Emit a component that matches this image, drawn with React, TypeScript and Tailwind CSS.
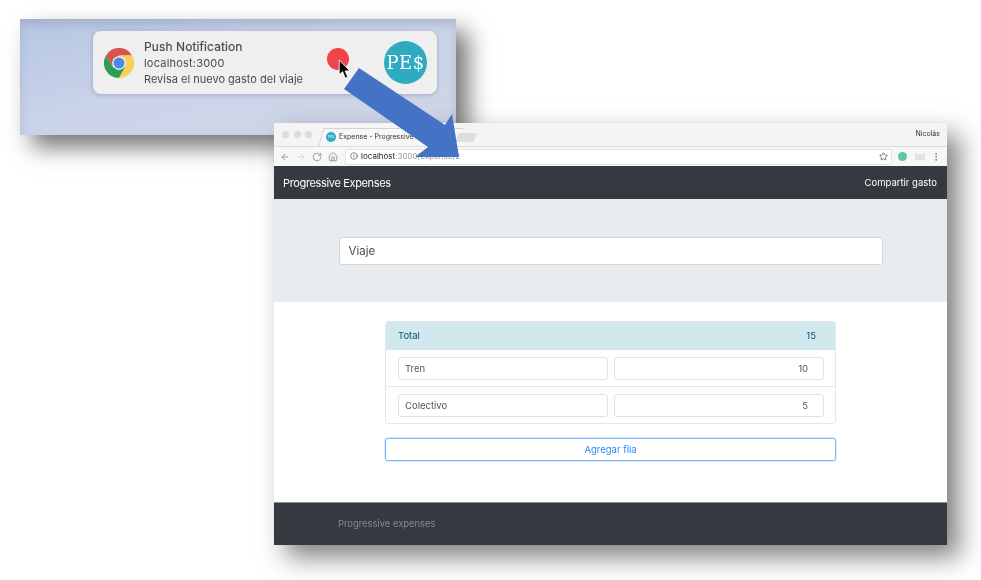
import { ArrowLeft, ArrowRight, RotateCw, Home, Info, Star, EllipsisVertical } from 'lucide-react'

function ChromeLogo() {
  return (
    <svg viewBox="0 0 48 48" className="h-[30px] w-[30px] shrink-0">
      <path d="M3.2 12 A 24 24 0 0 1 44.8 12 L24 12 L13.6 30 Z" fill="#d8534a" />
      <path d="M3.2 12 A 24 24 0 0 0 24 48 L34.4 30 L13.6 30 Z" fill="#2f9e55" />
      <path d="M44.8 12 A 24 24 0 0 1 24 48 L34.4 30 L24 12 Z" fill="#f9cf55" />
      <circle cx="24" cy="24" r="11" fill="#f3f3f3" />
      <circle cx="24" cy="24" r="8.8" fill="#4f86ec" />
    </svg>
  )
}

function Notification() {
  return (
    <div className="flex h-[63px] w-[344px] items-center rounded-[8px] bg-[#efefef] pr-[10px] pl-[11px] shadow-[0_1px_4px_rgba(80,90,120,0.35)]">
      <ChromeLogo />
      <div className="mt-[1px] ml-[10px] flex flex-1 flex-col text-[#4a4a4a]">
        <p className="text-[12px] leading-[16px] font-normal tracking-[0.1px] [-webkit-text-stroke:0.2px_#4a4a4a]">Push Notification</p>
        <p className="text-[11px] leading-[16px] tracking-[0.2px]">localhost:3000</p>
        <p className="text-[11px] leading-[16px]">Revisa el nuevo gasto del viaje</p>
      </div>
      <div className="relative mr-[35px] mb-[7px] h-[22px] w-[22px] rounded-full bg-[#f0434c]">
        {/* cursor */}
        <svg viewBox="0 0 12 18" className="absolute top-[12px] left-[11px] h-[19px] w-[13px]">
          <path d="M1 0 L1 14 L4.2 11 L6.6 17 L9 16 L6.6 10.4 L11 10.2 Z" fill="#000" stroke="#fff" strokeWidth="0.8" />
        </svg>
      </div>
      <div className="flex h-[43px] w-[43px] shrink-0 items-center justify-center rounded-full bg-[#2eabc1] font-['DejaVu_Serif',serif] text-[18px] tracking-[0.5px] text-white">
        PE$
      </div>
    </div>
  )
}

function BrowserChrome() {
  return (
    <>
      {/* Tab strip */}
      <div className="relative flex h-[23px] items-center bg-[#f4f4f4]">
        <div className="ml-[8px] flex gap-[4.5px]">
          <span className="h-[7px] w-[7px] rounded-full bg-[#dcdcdc]" />
          <span className="h-[7px] w-[7px] rounded-full bg-[#dcdcdc]" />
          <span className="h-[7px] w-[7px] rounded-full bg-[#dcdcdc]" />
        </div>
        <div className="absolute bottom-0 left-[47px] h-[18px] w-[140px] -skew-x-[16deg] border-t border-l border-[#d4d4d4] bg-[#f7f7f7]" />
        <div className="absolute bottom-0 left-[52px] flex h-[18px] items-center">
          <span className="flex h-[10px] w-[10px] items-center justify-center rounded-full bg-[#2eabc1] text-[3px] text-white">PE$</span>
          <span className="ml-[3px] text-[7px] whitespace-nowrap text-[#333]">Expense - Progressive</span>
        </div>
        <div className="absolute top-[10px] left-[183px] h-[9px] w-[18px] -skew-x-[20deg] rounded-[1px] bg-[#dedede]" />
        <span className="ml-auto pr-[7px] text-[7px] text-[#333]">Nicolás</span>
      </div>
      {/* Toolbar */}
      <div className="flex h-[20px] items-center border-t border-[#dcdcdc] bg-[#f7f7f7] pr-[6px] pl-[6px]">
        <div className="flex items-center gap-[6px] text-[#8a8a8a]">
          <ArrowLeft size={10} />
          <ArrowRight size={10} className="text-[#d0d0d0]" />
          <RotateCw size={10} />
          <Home size={10} />
        </div>
        <div className="ml-[7px] flex h-[16px] flex-1 items-center rounded-[2px] border border-[#e4e4e4] bg-white pr-[3px] pb-[1px] pl-[4px]">
          <Info size={8} className="text-[#555]" />
          <span className="ml-[3px] text-[8px] text-[#9a9a9a]">
            <span className="text-[#222]">localhost</span>:3000/expense/2
          </span>
          <Star size={9} className="ml-auto text-[#555]" />
        </div>
        <span className="ml-[6px] h-[9px] w-[9px] rounded-full bg-[#5cc8a0]" />
        <span className="ml-[8px] h-[6px] w-[10px] rounded-[1px] bg-[#e2e2e2]" />
        <EllipsisVertical size={10} className="ml-[6px] text-[#777]" />
      </div>
    </>
  )
}

function ExpenseRow({ name, amount, last }: { name: string; amount: string; last?: boolean }) {
  return (
    <div className={`grid grid-cols-2 items-center gap-[6px] pr-[11px] pl-[12px] ${last ? 'h-[36px]' : 'h-[37px] border-b border-[#e7e7e7]'}`}>
      <div className="flex h-[23px] items-center rounded-[3px] border border-[#dfe2e5] px-[6px] pt-[2px] text-[#555]">{name}</div>
      <div className="flex h-[23px] items-center justify-end rounded-[3px] border border-[#dfe2e5] px-[15px] pt-[2px] text-[#555]">{amount}</div>
    </div>
  )
}

function Page() {
  return (
    <div className="flex flex-1 flex-col">
      <nav className="flex h-[33px] items-center justify-between bg-[#343a40] pt-[1px] pr-[10px] pl-[9px] text-white">
        <span className="text-[11px] tracking-[-0.35px]">Progressive Expenses</span>
        <span className="text-[9.5px]">Compartir gasto</span>
      </nav>
      <div className="flex h-[103px] items-center justify-center bg-[#e9ecef]">
        <div className="mt-[1px] flex h-[28px] w-[544px] items-center rounded-[3px] border border-[#d4d7da] bg-white px-[9px] pt-[2px] text-[11.5px] text-[#495057]">
          Viaje
        </div>
      </div>
      <div className="flex flex-1 flex-col items-center bg-white pt-[19px] text-[9.5px]">
        <div className="w-[451px] overflow-hidden rounded-[3px] border border-[#e7e7e7]">
          <div className="flex h-[28px] items-center justify-between bg-[#d1e9ee] px-[12px] text-[#0c5460]">
            <span>Total</span>
            <span className="pr-[7px]">15</span>
          </div>
          <ExpenseRow name="Tren" amount="10" />
          <ExpenseRow name="Colectivo" amount="5" last />
        </div>
        <div className="mt-[14px] flex h-[23px] w-[451px] items-center justify-center rounded-[3px] border border-[#7ab6fc] pt-[1px] text-[#268bfd] shadow-[0_0_0_1px_rgba(122,182,252,0.25)]">
          Agregar fila
        </div>
      </div>
      <footer className="flex h-[43px] items-center border-t border-[#8d9094] bg-[#343a40] pt-[1px] pl-[64px] text-[9.4px] text-[#838a93]">
        Progressive expenses
      </footer>
    </div>
  )
}

export default function App() {
  return (
    <div className="relative h-[580px] w-[981px] overflow-hidden bg-white font-['Inter',sans-serif] blur-[0.4px]">
      {/* Desktop crop with the notification */}
      <div className="absolute top-[19px] left-[20px] h-[116px] w-[436px] bg-gradient-to-br from-[#b7c6e4] via-[#cbd4e9] to-[#cfd5e6] pt-[12px] pl-[73px] shadow-[12px_12px_22px_rgba(0,0,0,0.55),inset_0_6px_8px_rgba(120,130,160,0.3)]">
        <Notification />
      </div>

      {/* Browser window */}
      <div className="absolute top-[123px] left-[274px] flex h-[422px] w-[673px] flex-col shadow-[12px_12px_24px_rgba(0,0,0,0.5)]">
        <BrowserChrome />
        <Page />
      </div>

      {/* Arrow from notification to browser */}
      <svg className="absolute inset-0 h-[580px] w-[981px]" viewBox="0 0 981 580">
        <polygon points="359,68 344,89 428,147 415,157 459,157 452,114 445,125" fill="#4472c4" />
      </svg>
    </div>
  )
}
